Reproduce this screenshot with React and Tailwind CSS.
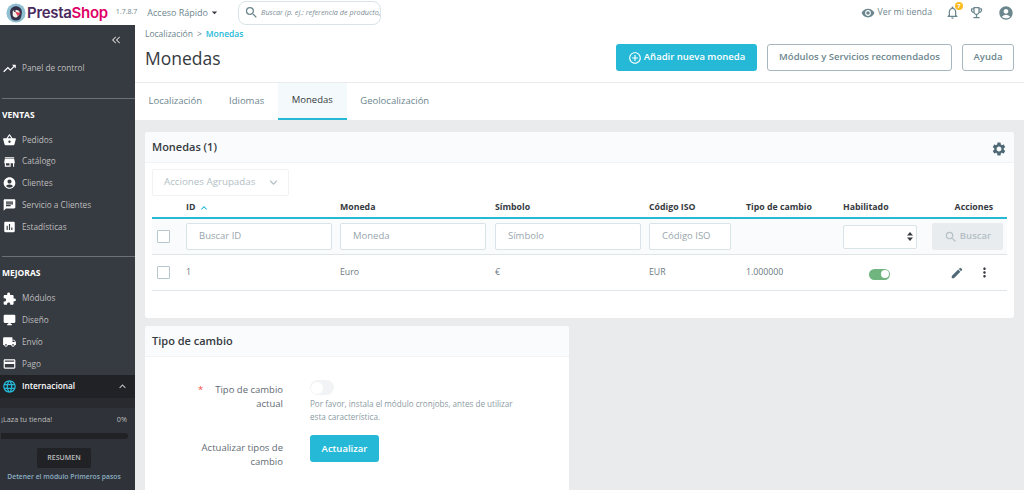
import {
  MdTrendingUp, MdShoppingBasket, MdStore, MdAccountCircle, MdChat, MdAssessment,
  MdExtension, MdDesktopWindows, MdLocalShipping, MdCreditCard, MdLanguage, MdExpandLess,
  MdExpandMore, MdKeyboardDoubleArrowLeft, MdSearch, MdArrowDropDown, MdRemoveRedEye,
  MdNotificationsNone, MdOutlineEmojiEvents, MdAddCircleOutline, MdSettings, MdEdit, MdMoreVert,
} from "react-icons/md";

const FONT = "font-['Open_Sans','Noto_Sans',sans-serif]";

const VENTAS = [
  { label: "Pedidos", icon: MdShoppingBasket },
  { label: "Catálogo", icon: MdStore },
  { label: "Clientes", icon: MdAccountCircle },
  { label: "Servicio a Clientes", icon: MdChat },
  { label: "Estadísticas", icon: MdAssessment },
];

const MEJORAS = [
  { label: "Módulos", icon: MdExtension },
  { label: "Diseño", icon: MdDesktopWindows },
  { label: "Envío", icon: MdLocalShipping },
  { label: "Pago", icon: MdCreditCard },
];

const TABS = ["Localización", "Idiomas", "Monedas", "Geolocalización"];
const COLS = "grid grid-cols-[34px_154px_155px_154px_97px_97px_89px_75px]";

function Logo() {
  return (
    <svg width="20" height="20" viewBox="0 0 24 24" className="shrink-0">
      <circle cx="12" cy="12" r="11.500" fill="#8fbfd0" />
      <path d="M12 4c-4 0-7 3-7 7 0 3 1 6 2 8.500 3 2 7 2 10 0 1-2.500 2-5.500 2-8.500 0-4-3-7-7-7z" fill="#34314a" />
      <path d="M8 10c1-2 6-2 8 0 1 2 0 5-3 7-3 1-5-1-5-3z" fill="#f3efe9" />
      <path d="M11 10.500l7 1.500-4 3.500z" fill="#df3e57" />
      <circle cx="10.500" cy="9.500" r="1.200" fill="#34314a" />
    </svg>
  );
}

function SideItem({ label, icon: Icon }) {
  return (
    <div className="flex h-[21.75px] items-center pl-[2px]">
      <Icon className="w-[15px] text-[14px] text-white" />
      <span className="ml-[5px] text-[8.25px] text-[#bebebe]">{label}</span>
    </div>
  );
}

function Sidebar() {
  return (
    <aside className="flex w-[135px] shrink-0 flex-col bg-[#363a41]">
      <div className="flex h-[28px] items-center justify-end pr-[12px] pt-[1px]">
        <MdKeyboardDoubleArrowLeft className="text-[14px] text-[#bebebe]" />
      </div>
      <div className="mt-[4px] flex h-[22px] items-center pl-[2px]">
        <MdTrendingUp className="w-[15px] text-[15px] text-white" />
        <span className="ml-[5px] text-[8.25px] text-[#bebebe]">Panel de control</span>
      </div>
      <div className="ml-[2px] mt-[19px] h-px bg-[#6c7077]" />
      <div className="mt-[9px] h-[14px] pl-[2px] text-[8.5px] font-bold leading-[14px] text-white">VENTAS</div>
      <div className="mt-[7px]">
        {VENTAS.map(v => <SideItem key={v.label} {...v} />)}
      </div>
      <div className="ml-[2px] mt-[18px] h-px bg-[#6c7077]" />
      <div className="mt-[9px] h-[14px] pl-[2px] text-[8.5px] font-bold leading-[14px] text-white">MEJORAS</div>
      <div className="mt-[8px]">
        {MEJORAS.map(v => <SideItem key={v.label} {...v} />)}
      </div>
      <div className="flex h-[23px] items-center bg-[#202226] pl-[2px] pr-[6px]">
        <MdLanguage className="w-[15px] text-[15px] text-[#25b9d7]" />
        <span className="ml-[5px] text-[8.25px] font-semibold text-white">Internacional</span>
        <MdExpandLess className="ml-auto text-[13px] text-[#bebebe]" />
      </div>
      <div className="h-[10px] bg-[#282a2f]" />
      <div className="flex-1 bg-[#2f3238] pl-[1px] pr-[8px] pt-[5px]">
        <div className="flex h-[14px] items-center justify-between text-[7.25px] text-[#bebebe]">
          <span>¡Laza tu tienda!</span>
          <span>0%</span>
        </div>
        <div className="mt-[6px] h-[6px] w-[127px] rounded-r-full bg-[#202226]" />
        <div className="ml-[36px] mt-[9px] flex h-[20px] w-[54px] items-center justify-center rounded-[2px] bg-[#202226] text-[7px] font-semibold text-[#bebebe]">
          RESUMEN
        </div>
        <div className="mt-[4px] whitespace-nowrap text-center text-[6.8px] font-semibold text-[#8dafc3]">
          Detener el módulo Primeros pasos
        </div>
      </div>
    </aside>
  );
}

function TopBar() {
  return (
    <header className="flex h-[25px] shrink-0 items-center bg-white pl-[6px] pr-[10px]">
      <Logo />
      <span className="ml-[1px] font-['Inter',sans-serif] text-[15px] font-semibold leading-none tracking-[-0.3px] text-[#4a2a5e]">
        Presta<span className="text-[#df0067]">Shop</span>
      </span>
      <span className="ml-[8px] text-[7px] text-[#6c868e]">1.7.8.7</span>
      <span className="ml-[10px] flex items-center text-[9px] text-[#6c868e]">
        Acceso Rápido
        <MdArrowDropDown className="text-[13px] text-[#363a41]" />
      </span>
      <div className="ml-[17px] flex h-[24px] w-[143px] items-center overflow-hidden rounded-[8px] border border-[#d8e4e8] pl-[5px]">
        <MdSearch className="shrink-0 text-[15px] text-[#6c868e]" />
        <span className="ml-[2px] whitespace-nowrap text-[7.25px] italic text-[#7d8d95]">Buscar (p. ej.: referencia de producto,</span>
      </div>
      <div className="ml-auto flex items-center">
        <MdRemoveRedEye className="text-[14px] text-[#6c868e]" />
        <span className="ml-[3px] text-[8.75px] text-[#6c868e]">Ver mi tienda</span>
        <span className="relative ml-[13px] flex">
          <MdNotificationsNone className="text-[15px] text-[#6c868e]" />
          <span className="absolute -right-[3px] -top-[3px] flex h-[8px] w-[8px] items-center justify-center rounded-full bg-[#fbbb22] text-[6px] font-bold text-white">7</span>
        </span>
        <MdOutlineEmojiEvents className="ml-[9px] text-[15px] text-[#6c868e]" />
        <MdAccountCircle className="ml-[14px] text-[16px] text-[#6c868e]" />
      </div>
    </header>
  );
}

function PageHead() {
  return (
    <div className="bg-white">
      <div className="flex h-[58px] border-b border-[#eaebec] pl-[10px] pr-[10px]">
        <div>
          <div className="mt-[3px] flex h-[12px] items-center text-[8.5px] text-[#6c868e]">
            Localización<span className="mx-[4px]">&gt;</span><span className="font-semibold text-[#25b9d7]">Monedas</span>
          </div>
          <h1 className="mt-[5px] text-[17.5px] font-normal leading-[27px] text-[#363a41]">Monedas</h1>
        </div>
        <div className="ml-auto mt-[19px] flex items-start text-[9.5px] font-semibold">
          <button className="flex h-[27px] w-[141px] items-center justify-center rounded-[3px] bg-[#25b9d7] text-white">
            <MdAddCircleOutline className="mr-[2px] text-[14px]" />Añadir nueva moneda
          </button>
          <button className="ml-[10px] h-[27px] w-[185px] rounded-[3px] border border-[#a8b7bf] text-[#6c868e]">
            Módulos y Servicios recomendados
          </button>
          <button className="ml-[10px] h-[27px] w-[52px] rounded-[3px] border border-[#a8b7bf] text-[#6c868e]">
            Ayuda
          </button>
        </div>
      </div>
      <nav className="flex h-[37px] text-[9.5px] text-[#6c868e]">
        {TABS.map(t => (
          <div key={t} className={t === "Monedas"
            ? "flex items-center border-b-2 border-[#25b9d7] bg-[#f4f9fb] px-[14px] text-[#363a41]"
            : "flex items-center px-[13.5px]"}>
            {t}
          </div>
        ))}
      </nav>
    </div>
  );
}

function Input({ placeholder, className }) {
  return (
    <div className={`flex h-[27px] items-center rounded-[2px] border border-[#d8e4e8] bg-white pl-[12px] text-[9.5px] text-[#98a6ad] ${className}`}>
      {placeholder}
    </div>
  );
}

function CheckBox() {
  return <div className="h-[13px] w-[13px] rounded-[1px] border border-[#b7c6cc] bg-white" />;
}

function CurrencyCard() {
  return (
    <section className="h-[186px] rounded-[3px] bg-white">
      <div className="flex h-[31px] items-center justify-between rounded-t-[3px] border-b border-[#f1f3f5] bg-[#fafbfc] px-[7px]">
        <h2 className="text-[11px] font-semibold text-[#363a41]">Monedas (1)</h2>
        <MdSettings className="mt-[3px] text-[16px] text-[#4f6a76]" />
      </div>
      <div className="px-[7px]">
        <div className="mt-[6px] flex h-[27px] w-[137px] items-center justify-between rounded-[2px] border border-[#f0f2f4] pl-[11px] pr-[7px] text-[9.75px] text-[#b3c0c6]">
          Acciones Agrupadas
          <MdExpandMore className="text-[15px]" />
        </div>

        <div className={`${COLS} h-[23px] items-center border-b-2 border-[#25b9d7] pt-[3px] text-[8.75px] font-bold text-[#363a41]`}>
          <span />
          <span className="flex items-center">ID<MdExpandLess className="ml-[3px] text-[12px] text-[#25b9d7]" /></span>
          <span>Moneda</span>
          <span>Símbolo</span>
          <span>Código ISO</span>
          <span>Tipo de cambio</span>
          <span>Habilitado</span>
          <span className="whitespace-nowrap pr-[14px] text-right">Acciones</span>
        </div>

        <div className={`${COLS} h-[36px] items-center border-b border-[#dfe6ea] bg-[#fafbfc]`}>
          <div className="pl-[5px]"><CheckBox /></div>
          <Input placeholder="Buscar ID" className="w-[146px]" />
          <Input placeholder="Moneda" className="w-[146px]" />
          <Input placeholder="Símbolo" className="w-[146px]" />
          <Input placeholder="Código ISO" className="w-[82px]" />
          <span />
          <div className="flex h-[24px] w-[74px] items-center justify-end rounded-[2px] border border-[#d8e4e8] bg-white pr-[3px]">
            <svg width="6" height="9" viewBox="0 0 6 9" fill="#363a41">
              <polygon points="3,0 6,3.500 0,3.500" />
              <polygon points="3,9 6,5.500 0,5.500" />
            </svg>
          </div>
          <div className="flex h-[27px] w-[71px] items-center justify-center rounded-[2px] bg-[#e9ecee] text-[9.5px] font-semibold text-[#b3c0c6]">
            <MdSearch className="mr-[2px] text-[14px]" />Buscar
          </div>
        </div>

        <div className={`${COLS} h-[36px] items-center border-b border-[#dfe6ea] text-[8.75px] text-[#6c7a80]`}>
          <div className="pl-[5px]"><CheckBox /></div>
          <span>1</span>
          <span>Euro</span>
          <span>€</span>
          <span>EUR</span>
          <span>1.000000</span>
          <div className="pl-[26px] pt-[3px]">
            <div className="flex h-[11px] w-[21px] items-center justify-end rounded-full bg-[#70b580] pr-[1px]">
              <div className="h-[8px] w-[8px] rounded-full bg-white" />
            </div>
          </div>
          <div className="flex items-center pl-[18px] text-[#4f6a76]">
            <MdEdit className="text-[14px]" />
            <MdMoreVert className="ml-[13px] text-[15px] text-[#363a41]" />
          </div>
        </div>
      </div>
    </section>
  );
}

function ExchangeCard() {
  return (
    <section className="mt-[8px] h-[200px] w-[424px] rounded-[3px] bg-white">
      <div className="flex h-[31px] items-center rounded-t-[3px] border-b border-[#f1f3f5] bg-[#fafbfc] pl-[7px]">
        <h2 className="text-[11px] font-semibold text-[#363a41]">Tipo de cambio</h2>
      </div>
      <div className="grid grid-cols-[138px_1fr] gap-x-[27px] pt-[23px] text-[9.5px] leading-[14px] text-[#5f6b72]">
        <div className="relative pl-[46px] pt-[3px] text-right">
          <span className="absolute left-[53px] top-[3px] text-[#f54c3e]">*</span>
          Tipo de cambio actual
        </div>
        <div>
          <div className="flex h-[15px] w-[24px] items-center rounded-full bg-[#f1f3f4] pl-[1px]">
            <div className="h-[12px] w-[12px] rounded-full bg-white" />
          </div>
          <p className="mt-[2px] w-[212px] text-[8.1px] leading-[13px] text-[#8c9ba3]">
            Por favor, instala el módulo cronjobs, antes de utilizar esta característica.
          </p>
        </div>
        <div className="mt-[18px] pl-[40px] text-right">Actualizar tipos de cambio</div>
        <div className="mt-[12px]">
          <button className="h-[27px] w-[69px] rounded-[3px] bg-[#25b9d7] text-[9.5px] font-semibold text-white">Actualizar</button>
        </div>
      </div>
    </section>
  );
}

export default function App() {
  return (
    <div className={`flex h-[490px] w-[1024px] flex-col overflow-hidden bg-white ${FONT}`}>
      <TopBar />
      <div className="flex min-h-0 flex-1">
        <Sidebar />
        <main className="min-w-0 flex-1 bg-[#eaebec]">
          <PageHead />
          <div className="px-[10px] pt-[12px]">
            <CurrencyCard />
            <ExchangeCard />
          </div>
        </main>
      </div>
    </div>
  );
}
